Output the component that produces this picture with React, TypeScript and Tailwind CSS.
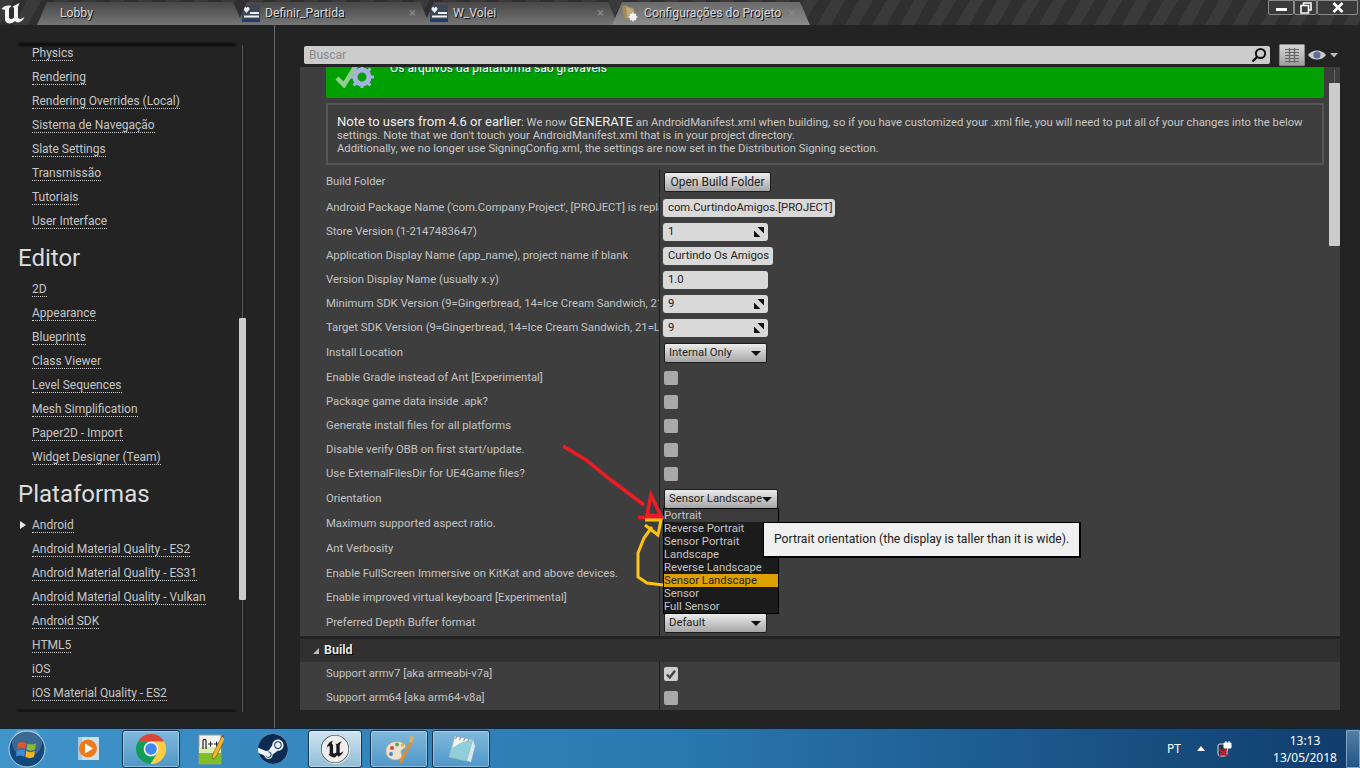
import type { ReactNode } from "react";
import { SiSteam, SiUnrealengine } from "react-icons/si";

const topLinks = ["Physics", "Rendering", "Rendering Overrides (Local)", "Sistema de Navegação", "Slate Settings", "Transmissão", "Tutoriais", "User Interface"];
const editorLinks = ["2D", "Appearance", "Blueprints", "Class Viewer", "Level Sequences", "Mesh Simplification", "Paper2D - Import", "Widget Designer (Team)"];
const platformLinks = ["Android", "Android Material Quality - ES2", "Android Material Quality - ES31", "Android Material Quality - Vulkan", "Android SDK", "HTML5", "iOS", "iOS Material Quality - ES2"];
const orientations = ["Portrait", "Reverse Portrait", "Sensor Portrait", "Landscape", "Reverse Landscape", "Sensor Landscape", "Sensor", "Full Sensor"];

function SideLink({ label, active }: { label: string; active?: boolean }) {
  return (
    <div className="h-[24px] pl-[32px] flex items-center relative text-[12px] text-[#c6c6c6]">
      {active && <span className="absolute left-[20px] top-[8px] w-0 h-0 border-y-[4px] border-y-transparent border-l-[6px] border-l-[#e8e8e8]" />}
      <span className="border-b border-dotted border-[#d0d0d0] leading-[14px]">{label}</span>
    </div>
  );
}

function SpinIcon() {
  return (
    <svg width="10" height="10" viewBox="0 0 10 10" className="ml-auto mr-[4px]">
      <path d="M3.5 0H10V6.5Z M0 3.5L6.5 10H0Z" fill="#111" />
    </svg>
  );
}

function Field({ value, width, spin }: { value: string; width: string; spin?: boolean }) {
  return (
    <div className={`h-[18px] ${width} bg-[#d9d9d9] rounded-[3px] flex items-center pl-[5px] text-[11.3px] text-[#222] whitespace-nowrap`}>
      {value}
      {spin && <SpinIcon />}
    </div>
  );
}

function Combo({ value, width }: { value: string; width: string }) {
  return (
    <div className={`h-[20px] ${width} ml-px rounded-[2px] border border-[#1c1c1c] bg-gradient-to-b from-[#ececec] to-[#a6a6a6] flex items-center justify-between pl-[4px] pr-[5px] text-[11.3px] text-[#222] whitespace-nowrap`}>
      {value}
      <span className="w-0 h-0 border-x-[5px] border-x-transparent border-t-[5px] border-t-[#111]" />
    </div>
  );
}

function Check({ on }: { on?: boolean }) {
  return (
    <div className={`w-[14px] h-[14px] ml-px rounded-[2px] flex items-center justify-center ${on ? "bg-[#cfcfcf]" : "bg-[#a9a9a9]"}`}>
      {on && (
        <svg width="12" height="12" viewBox="0 0 12 12">
          <path d="M2 6.5L4.8 9.5L10 2.8" fill="none" stroke="#444" strokeWidth="2.4" />
        </svg>
      )}
    </div>
  );
}

function Row({ label, h = "h-[24px]", children }: { label: string; h?: string; children: ReactNode }) {
  return (
    <div className={`${h} shrink-0 flex items-center`}>
      <div className="w-[333px] ml-[26px] overflow-hidden whitespace-nowrap text-[11.3px] text-[#c4c4c4]">{label}</div>
      <div className="self-stretch w-px bg-[#1d1d1d]" />
      <div className="pl-[3px]">{children}</div>
    </div>
  );
}

function WidgetIcon() {
  return (
    <svg width="18" height="17" viewBox="0 0 18 17" className="shrink-0">
      <rect width="18" height="17" fill="#1f3a78" />
      <rect y="0" width="18" height="14" fill="#3c4758" />
      <path d="M4.5 8L1.5 4.5C1 2.5 3.5 1 4.5 3C5.5 1 8 2.5 7.5 4.5Z" fill="#f0f0f0" />
      <rect x="8" y="7" width="9" height="2" fill="#f0f0f0" />
      <rect x="2" y="10.5" width="15" height="2" fill="#f0f0f0" />
    </svg>
  );
}

function ConfigIcon() {
  return (
    <svg width="18" height="18" viewBox="0 0 18 18" className="shrink-0">
      <path d="M1 2L5 1L8 3L13 4L14 11L6 15L3 14Z" fill="#a08a60" />
      <path d="M5 3L12 5L13 11L6 14Z" fill="#c2a878" />
      <circle cx="12" cy="13" r="3.4" fill="#f4f4f4" />
      <circle cx="12" cy="13" r="1.2" fill="#555" />
      <path d="M12 8.6V17.4M7.6 13H16.4M9 10L15 16M15 10L9 16" stroke="#f4f4f4" strokeWidth="1.4" />
    </svg>
  );
}

function Tab({ label, icon, width, pad, active, close = true }: { label: string; icon?: ReactNode; width: string; pad: string; active?: boolean; close?: boolean }) {
  return (
    <div
      className={`${width} ${pad} h-[23px] pb-[1px] -mr-[6px] flex items-center [clip-path:polygon(0_100%,10px_0,calc(100%-10px)_0,100%_100%)] gap-[5px] text-[12.2px] text-[#d8d8d8] [text-shadow:1px_1px_0_#111] ${
        active ? "bg-gradient-to-b from-[#6a6a6a] to-[#8c8c8c]" : "bg-gradient-to-b from-[#474747] to-[#767676]"
      }`}
    >
      {icon}
      <span className="whitespace-nowrap">{label}</span>
      {close && <span className={`text-[13px] text-[#8c8c8c] [text-shadow:none] ${active ? "ml-[2px]" : "ml-auto"}`}>×</span>}
    </div>
  );
}

function TaskButton({ children, width, active }: { children: ReactNode; width: string; active?: boolean }) {
  return (
    <div
      className={`${width} h-[38px] mt-px rounded-[3px] border border-[#16324f] flex items-center justify-center shadow-[inset_0_0_0_1px_rgba(255,255,255,0.35)] ${
        active ? "bg-gradient-to-b from-[#cfe4f1] to-[#8fbdd8]" : "bg-gradient-to-b from-[#7fb9dc] to-[#4f97c8]"
      }`}
    >
      {children}
    </div>
  );
}

function ChromeIcon() {
  return (
    <svg width="30" height="30" viewBox="-15 -15 30 30">
      <path d="M-13 -7.5A15 15 0 0 1 13 -7.5L0 -7.5Z" fill="#db4437" />
      <path d="M-13 -7.5A15 15 0 0 0 -0.5 15L6.5 3.7L0 -7.5Z" fill="#0f9d58" />
      <path d="M13 -7.5A15 15 0 0 1 -0.5 15L6.5 3.7L0 -7.5Z" fill="#ffcd40" />
      <circle r="7.4" fill="#f1f1f1" />
      <circle r="5.8" fill="#4285f4" />
    </svg>
  );
}

function StartOrb() {
  return (
    <svg width="38" height="38" viewBox="0 0 38 38">
      <circle cx="19" cy="19" r="18" fill="#12487a" stroke="#b7d5ea" strokeWidth="1" />
      <circle cx="19" cy="12" r="15" fill="#ffffff" opacity="0.18" />
      <path d="M10 13C13 11.5 15 11.5 18 13L17 19C14.5 17.5 12 17.5 9 19Z" fill="#e2552c" />
      <path d="M19.5 13.5C22 15 25 15 28 13L27 19.5C24 21 21.5 21 18.5 19.5Z" fill="#8dbb2c" />
      <path d="M8.8 20.5C12 19 14.5 19 16.8 20.5L16 26.5C13.5 25 11 25 8 26.5Z" fill="#3a8ed4" />
      <path d="M18.3 21C21 22.5 24 22.5 26.8 21L26 27C23 28.5 20.5 28.5 17.4 27Z" fill="#f5b51c" />
    </svg>
  );
}

function MediaIcon() {
  return (
    <svg width="26" height="26" viewBox="0 0 26 26">
      <rect x="2" y="1" width="21" height="23" fill="#a9cbe2" />
      <rect x="6" y="1" width="17" height="23" fill="#dbe9f3" opacity="0.7" />
      <circle cx="12" cy="12.5" r="9" fill="#f07a1a" />
      <path d="M9 7.5L17 12.5L9 17.5Z" fill="#fff" />
    </svg>
  );
}

function NppIcon() {
  return (
    <svg width="26" height="32" viewBox="0 0 26 32">
      <rect x="1" y="2" width="22" height="29" fill="#f5f5f0" stroke="#9a9a8c" />
      <path d="M1 20H23V31H1Z" fill="#7fbf2a" />
      <path d="M1 14H23V20H1Z" fill="#d9ecae" />
      <path d="M5 16V7.5C5 6 8 6 8 7.5V16" fill="none" stroke="#222" strokeWidth="1.2" />
      <path d="M10 11H15M12.5 8.5V13.5M16 11H21M18.5 8.5V13.5" stroke="#222" strokeWidth="1" />
      <path d="M24 3L14 23L15 26L18 24L27 6Z" fill="#f2b632" stroke="#6b4a10" strokeWidth="0.6" />
      <path d="M24 3L27 6L28 3.5L26 1.5Z" fill="#c0392b" />
    </svg>
  );
}

function PaintIcon() {
  return (
    <svg width="30" height="30" viewBox="0 0 30 30">
      <path d="M2 17C2 9 11 6 17 8C22 10 23 13 19 15C15 17 18 19 18 22C17 26 11 27 7 25C3 23 2 20 2 17Z" fill="#efe3cf" stroke="#b9a98e" strokeWidth="0.7" />
      <circle cx="8" cy="14" r="2" fill="#d9433f" />
      <circle cx="13" cy="10.5" r="2" fill="#4cae4f" />
      <circle cx="18.5" cy="11" r="1.8" fill="#e9b52c" />
      <circle cx="7" cy="20" r="2" fill="#3f86cf" />
      <path d="M26 7L15 28L17.5 29.5L28 8.5Z" fill="#e98c21" />
      <path d="M25 8L26 1L30 3L28.5 9Z" fill="#d6b06e" />
    </svg>
  );
}

function NotepadIcon() {
  return (
    <svg width="30" height="30" viewBox="0 0 30 30">
      <path d="M9 2L27 6L21 27L3 23Z" fill="#f4f6f6" stroke="#a2afb6" strokeWidth="0.7" />
      <path d="M6 14L16 8L27 6L21 27L3 23Z" fill="#6fc1cf" opacity="0.75" />
      <path d="M11 2L9.5 5M15 3L13.5 6M19 4L17.5 7M23 5L21.5 8" stroke="#7b8890" strokeWidth="1" />
      <path d="M27 6L29 12L25 28L21 27Z" fill="#dfe6e8" />
    </svg>
  );
}

export default function App() {
  return (
    <div className="w-[1360px] h-[768px] relative overflow-hidden flex flex-col bg-[#232323] font-['Roboto',sans-serif]">
      {/* tab bar */}
      <div className="h-[25px] shrink-0 flex items-end bg-[#2b2b2b] bg-[repeating-linear-gradient(120deg,#3a3a3a_0,#3a3a3a_12px,#2f2f2f_12px,#2f2f2f_24px)]">
        <div className="w-[37px] self-start pt-[2px] pl-[1px] shrink-0">
          <svg width="24" height="22" viewBox="0 0 24 22">
            <path d="M0.5 7C3.5 3.5 7 3 10.5 4L8 6.5V15.5C9 17.5 11 17.5 13 15.5V6L11.5 4.5L18.5 1L17 5V15.5C17.5 17.5 20 17.5 23.5 15C21.5 20 16.5 22 14 19C11 22 6 22.5 4 18.5V8Z" fill="#f4f4f4" />
          </svg>
        </div>
        <Tab label="Lobby" width="w-[206px]" pad="pl-[23px] pr-[14px]" close={false} />
        <Tab label="Definir_Partida" icon={<WidgetIcon />} width="w-[193px]" pad="pl-[5px] pr-[14px]" />
        <Tab label="W_Volei" icon={<WidgetIcon />} width="w-[194px]" pad="pl-[6px] pr-[14px]" />
        <Tab label="Configurações do Projeto" icon={<ConfigIcon />} width="w-[198px]" pad="pl-[9px] pr-[14px]" active />
        <div className="ml-auto self-start flex h-[15px] mr-[2px] text-white">
          <div className="w-[26px] border border-[#8a8a8a] rounded-b-[2px] bg-[#3a3a3a] flex items-center justify-center">
            <span className="w-[11px] h-[3px] bg-white mt-[3px]" />
          </div>
          <div className="w-[23px] border border-[#8a8a8a] rounded-b-[2px] bg-[#3a3a3a] flex items-center justify-center">
            <svg width="12" height="12" viewBox="0 0 12 12">
              <path d="M3.5 3V1H11V8H9M1 3.5H8.5V11H1Z" fill="none" stroke="#fff" strokeWidth="1.6" />
            </svg>
          </div>
          <div className="w-[41px] border border-[#8a8a8a] rounded-b-[2px] bg-[#3a3a3a] flex items-center justify-center">
            <svg width="12" height="11" viewBox="0 0 12 11">
              <path d="M1.5 1L10.5 10M10.5 1L1.5 10" stroke="#fff" strokeWidth="2.6" />
            </svg>
          </div>
        </div>
      </div>

      {/* main area */}
      <div className="h-[703px] shrink-0 flex">
        {/* sidebar */}
        <div className="w-[275px] shrink-0 pt-[3px] pb-[3px] border-r border-[#6a6a6a] flex">
          <div className="w-[243px] mt-[13px] mb-[13px] relative overflow-hidden">
            <div className="absolute left-[18px] top-[2px] w-[218px] h-[3px] bg-black/70 blur-[1px]" />
            <div className="absolute left-[18px] bottom-0 w-[218px] h-[2px] bg-black/70 blur-[1px]" />
            {topLinks.map((l) => <SideLink key={l} label={l} />)}
            <div className="h-[44px] pl-[18px] pt-[10px] text-[24px] leading-[30px] text-[#dcdcdc]">Editor</div>
            {editorLinks.map((l) => <SideLink key={l} label={l} />)}
            <div className="h-[44px] pl-[18px] pt-[10px] text-[24px] leading-[30px] text-[#dcdcdc]">Plataformas</div>
            {platformLinks.map((l) => <SideLink key={l} label={l} active={l === "Android"} />)}
          </div>
          <div className="w-[7px] -ml-[4px] mt-[17px] mb-[13px] flex flex-col items-center">
            <div className="h-[273px] w-px bg-[#555]" />
            <div className="h-[282px] w-[7px] bg-[#cccccc] rounded-[1px]" />
            <div className="flex-1 w-px bg-[#555]" />
          </div>
        </div>

        {/* details */}
        <div className="flex-1 pl-[25px] flex flex-col">
          <div className="h-[42px] shrink-0 flex items-center pl-[4px] pt-[18px]">
            <div className="w-[966px] h-[18px] bg-[#cccccc] rounded-[2px] flex items-center pl-[5px] pr-[3px] text-[12px] text-[#8a8a8a]">
              Buscar
              <svg width="16" height="16" viewBox="0 0 16 16" className="ml-auto">
                <circle cx="9.5" cy="6.5" r="4.6" fill="none" stroke="#111" strokeWidth="2" />
                <path d="M6 10L1.5 14.5" stroke="#111" strokeWidth="2.4" />
              </svg>
            </div>
            <div className="w-[26px] h-[22px] ml-[9px] rounded-[1px] border border-[#888] bg-gradient-to-b from-[#d8d8d8] to-[#a0a0a0] flex items-center justify-center">
              <svg width="14" height="15" viewBox="0 0 14 15">
                <path d="M0 1.5H14M0 4.5H14M0 7.5H14M0 10.5H14M0 13.5H14M4.5 0V15M9.5 0V15" stroke="#666" strokeWidth="1.2" />
              </svg>
            </div>
            <svg width="30" height="12" viewBox="0 0 30 12" className="ml-[3px]">
              <path d="M0 6C4 0 14 0 18 6C14 12 4 12 0 6Z" fill="#c9c9c9" />
              <circle cx="9" cy="6" r="3.6" fill="#5f6f98" />
              <path d="M22 4H30L26 8.5Z" fill="#bdbdbd" />
            </svg>
          </div>

          <div className="h-[643px] w-[1040px] shrink-0 bg-[#3e3e3e] flex overflow-hidden">
            <div className="w-[1028px] shrink-0 flex flex-col">
              <div className="h-[31px] shrink-0 ml-[26px] mr-[4px] bg-[#00a000] rounded-b-[2px] overflow-hidden">
                <div className="-mt-[9px] flex items-start pl-[9px] gap-[15px]">
                  <svg width="40" height="30" viewBox="0 0 40 30">
                    <path d="M2 20L9 27L22 6" fill="none" stroke="#8fcf8f" strokeWidth="4.5" />
                    <circle cx="27" cy="19" r="7" fill="none" stroke="#a8b2e0" strokeWidth="5" />
                    <path d="M27 7V31M15 19H39M18.5 10.5L35.5 27.5M35.5 10.5L18.5 27.5" stroke="#a8b2e0" strokeWidth="3" strokeDasharray="4 16" />
                  </svg>
                  <span className="mt-[1px] text-[12px] text-white [text-shadow:1px_1px_0_#063]">Os arquivos da plataforma são graváveis</span>
                </div>
              </div>
              <div className="h-[62px] shrink-0 mt-[5px] ml-[26px] mr-[4px] border-2 border-[#555] pl-[9px] pr-[4px] pt-[10px] text-[11.3px] leading-[13px] text-[#c8c8c8]">
                <span className="text-[13px] text-[#f0f0f0]">Note to users from 4.6 or earlier</span>: We now <span className="text-[13px] text-[#f0f0f0]">GENERATE</span> an AndroidManifest.xml when building, so if you have customized your .xml file, you will need to put all of your changes into the below settings. Note that we don't touch your AndroidManifest.xml that is in your project directory.
                <br />
                Additionally, we no longer use SigningConfig.xml, the settings are now set in the Distribution Signing section.
              </div>
              <div className="h-[4px] shrink-0" />
              <Row label="Build Folder" h="h-[26px] mb-px">
                <div className="h-[20px] w-[107px] ml-px rounded-[2px] border border-[#1c1c1c] bg-gradient-to-b from-[#ececec] to-[#a6a6a6] flex items-center justify-center text-[12px] text-[#222]">Open Build Folder</div>
              </Row>
              <Row label="Android Package Name ('com.Company.Project', [PROJECT] is replaced with project name)"><Field value="com.CurtindoAmigos.[PROJECT]" width="w-[172px]" /></Row>
              <Row label="Store Version (1-2147483647)"><Field value="1" width="w-[105px]" spin /></Row>
              <Row label="Application Display Name (app_name), project name if blank"><Field value="Curtindo Os Amigos" width="w-[110px]" /></Row>
              <Row label="Version Display Name (usually x.y)"><Field value="1.0" width="w-[105px]" /></Row>
              <Row label="Minimum SDK Version (9=Gingerbread, 14=Ice Cream Sandwich, 21=Lollipop)"><Field value="9" width="w-[105px]" spin /></Row>
              <Row label="Target SDK Version (9=Gingerbread, 14=Ice Cream Sandwich, 21=Lollipop)"><Field value="9" width="w-[105px]" spin /></Row>
              <Row label="Install Location" h="h-[26px]"><Combo value="Internal Only" width="w-[103px]" /></Row>
              <Row label="Enable Gradle instead of Ant [Experimental]"><Check /></Row>
              <Row label="Package game data inside .apk?"><Check /></Row>
              <Row label="Generate install files for all platforms"><Check /></Row>
              <Row label="Disable verify OBB on first start/update."><Check /></Row>
              <Row label="Use ExternalFilesDir for UE4Game files?"><Check /></Row>
              <Row label="Orientation" h="h-[26px]"><Combo value="Sensor Landscape" width="w-[114px]" /></Row>
              <Row label="Maximum supported aspect ratio."><div /></Row>
              <Row label="Ant Verbosity" h="h-[26px]"><div /></Row>
              <Row label="Enable FullScreen Immersive on KitKat and above devices."><div /></Row>
              <Row label="Enable improved virtual keyboard [Experimental]"><div /></Row>
              <Row label="Preferred Depth Buffer format" h="h-[26px]"><Combo value="Default" width="w-[103px]" /></Row>
              <div className="h-[3px] shrink-0 bg-[#232323] -mr-[12px]" />
              <div className="h-[23px] shrink-0 bg-[#303030] flex items-center pl-[13px] gap-[5px] text-[12.5px] font-bold text-[#e8e8e8] [text-shadow:1px_1px_0_#000] -mr-[12px]">
                <span className="w-0 h-0 border-l-[6px] border-l-transparent border-b-[6px] border-b-[#bbb]" />
                Build
              </div>
              <Row label="Support armv7 [aka armeabi-v7a]"><Check on /></Row>
              <Row label="Support arm64 [aka arm64-v8a]"><Check /></Row>
            </div>
            <div className="flex-1 flex flex-col items-center pt-[3px]">
              <div className="h-[13px] w-px bg-[#666]" />
              <div className="h-[163px] w-[11px] bg-[#cccccc] rounded-[1px]" />
            </div>
          </div>
        </div>
      </div>

      {/* taskbar */}
      <div className="h-[40px] shrink-0 border-t border-[#0b2740] bg-gradient-to-r from-[#3f94c9] via-[#2a78b0] to-[#103c6c] flex items-center text-white">
        <div className="w-[54px] pl-[8px] shrink-0"><StartOrb /></div>
        <div className="w-[68px] flex justify-center shrink-0 pl-[2px]"><MediaIcon /></div>
        <TaskButton width="w-[58px]"><ChromeIcon /></TaskButton>
        <div className="w-[62px] flex justify-center shrink-0"><NppIcon /></div>
        <div className="w-[66px] flex justify-center shrink-0 pr-[4px]">
          <div className="w-[30px] h-[30px] rounded-full bg-[#eaf2f7] flex items-center justify-center"><SiSteam size={30} color="#0c2b52" /></div>
        </div>
        <TaskButton width="w-[54px]" active>
          <div className="w-[29px] h-[29px] rounded-full bg-[#eeeeee] flex items-center justify-center"><SiUnrealengine size={28} color="#1c1c1c" /></div>
        </TaskButton>
        <div className="w-[8px] shrink-0" />
        <TaskButton width="w-[58px]"><PaintIcon /></TaskButton>
        <div className="w-[4px] shrink-0" />
        <TaskButton width="w-[58px]"><NotepadIcon /></TaskButton>
        <div className="ml-auto flex items-center text-[12px] font-['Noto_Sans',sans-serif]">
          <span>PT</span>
          <span className="ml-[16px] w-0 h-0 border-x-[4px] border-x-transparent border-b-[5px] border-b-white" />
          <svg width="16" height="16" viewBox="0 0 16 16" className="ml-[12px]">
            <rect x="1" y="3" width="9" height="12" rx="2" fill="#20364f" stroke="#ddd" />
            <path d="M7 2H14V7H7ZM9 0V2M12 0V2M10.5 7V10" stroke="#fff" fill="#fff" />
            <path d="M2 8L10 15M10 8L2 15" stroke="#e0161c" strokeWidth="2" />
          </svg>
          <div className="w-[70px] ml-[37px] text-center leading-[17px] whitespace-nowrap">
            <div>13:13</div>
            <div>13/05/2018</div>
          </div>
          <div className="w-[14px] h-[38px] ml-[6px] border border-[#9cc0d8]/70 bg-gradient-to-b from-[#6f9cbf]/70 to-[#2b5f8f]/70 rounded-[1px]" />
        </div>
      </div>

      {/* open combo list */}
      <div className="absolute left-[663px] top-[508px] w-[116px] h-[106px] bg-[#1b1b1b] border border-black text-[11.3px] leading-[13px] text-[#c4c4c4]">
        {orientations.map((o) => (
          <div key={o} className={`h-[13px] whitespace-nowrap ${o === "Sensor Landscape" ? "bg-[#dca100] text-[#222]" : o === "Portrait" ? "bg-[#3c3c3c]" : ""}`}>{o}</div>
        ))}
      </div>

      {/* tooltip */}
      <div className="absolute left-[763px] top-[522px] w-[318px] h-[36px] bg-[#f0f0f0] border-r-2 border-b-2 border-l border-t border-black flex items-center pl-[10px] text-[12.2px] text-[#222] whitespace-nowrap">
        Portrait orientation (the display is taller than it is wide).
      </div>

      {/* hand drawn marks */}
      <svg width="1360" height="768" viewBox="0 0 1360 768" className="absolute inset-0 pointer-events-none">
        <path d="M563 446L586 460L611 480L644 505" fill="none" stroke="#ed1c24" strokeWidth="3.5" />
        <path d="M651 495L647 515L661 516Z M638 517.5H664" fill="none" stroke="#ed1c24" strokeWidth="3.5" />
        <path d="M663 585L647 583L638 577V553L644 538L652 527M645 520H661L658 535L645 525" fill="none" stroke="#ffc20e" strokeWidth="3" />
      </svg>
    </div>
  );
}
